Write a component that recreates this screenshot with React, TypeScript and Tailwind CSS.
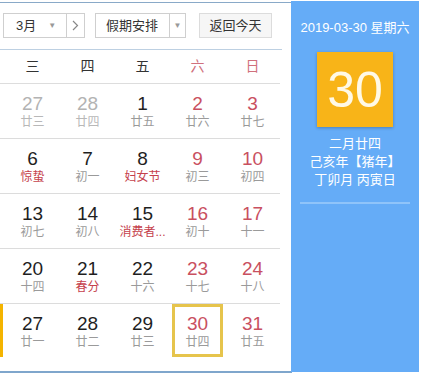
import React from "react";

type Cell = { d: string; l: string; kind: "prev" | "norm" | "wk"; fest?: boolean; today?: boolean };

const rows: Cell[][] = [
  [
    { d: "27", l: "廿三", kind: "prev" },
    { d: "28", l: "廿四", kind: "prev" },
    { d: "1", l: "廿五", kind: "norm" },
    { d: "2", l: "廿六", kind: "wk" },
    { d: "3", l: "廿七", kind: "wk" },
  ],
  [
    { d: "6", l: "惊蛰", kind: "norm", fest: true },
    { d: "7", l: "初一", kind: "norm" },
    { d: "8", l: "妇女节", kind: "norm", fest: true },
    { d: "9", l: "初三", kind: "wk" },
    { d: "10", l: "初四", kind: "wk" },
  ],
  [
    { d: "13", l: "初七", kind: "norm" },
    { d: "14", l: "初八", kind: "norm" },
    { d: "15", l: "消费者...", kind: "norm", fest: true },
    { d: "16", l: "初十", kind: "wk" },
    { d: "17", l: "十一", kind: "wk" },
  ],
  [
    { d: "20", l: "十四", kind: "norm" },
    { d: "21", l: "春分", kind: "norm", fest: true },
    { d: "22", l: "十六", kind: "norm" },
    { d: "23", l: "十七", kind: "wk" },
    { d: "24", l: "十八", kind: "wk" },
  ],
  [
    { d: "27", l: "廿一", kind: "norm" },
    { d: "28", l: "廿二", kind: "norm" },
    { d: "29", l: "廿三", kind: "norm" },
    { d: "30", l: "廿四", kind: "wk", today: true },
    { d: "31", l: "廿五", kind: "wk" },
  ],
];

const font = { fontFamily: '"Liberation Sans", "Noto Sans CJK SC", sans-serif' };

function DayCell({ c }: { c: Cell }) {
  const numColor =
    c.kind === "prev" ? "text-[#b3b3b3]" : c.kind === "wk" ? "text-[#c9505f]" : "text-[#1f1f1f]";
  const lunColor = c.fest
    ? "text-[#c5414c]"
    : c.kind === "prev"
    ? "text-[#b8b8b8]"
    : "text-[#9a9a9a]";
  return (
    <div className="relative flex flex-col items-center pt-[10px]">
      {c.today && (
        <div className="absolute left-[2px] right-[2px] top-[0px] h-[53px] border-[3px] border-[#e6c44c]" />
      )}
      <div className={`text-[19px] leading-[20px] ${numColor}`}>{c.d}</div>
      <div className={`text-[12px] leading-[16px] whitespace-nowrap ${lunColor}`}>{c.l}</div>
    </div>
  );
}

export default function App() {
  return (
    <div className="relative w-[422px] h-[375px] overflow-hidden bg-white flex" style={font}>
      {/* left calendar */}
      <div className="w-[291px] flex flex-col pt-[2px]">
        <div className="h-[1px] bg-[#89a9c8]" />
        <div className="h-[47px] flex items-start pt-[10px] pl-[3px] border-b border-[#bdd0e2] w-[282px]">
          <div className="h-[25px] w-[82px] border border-[#cfcfcf] flex items-center text-[13px] text-[#333]">
            <span className="ml-[12px]">3月</span>
            <span className="ml-[12px] text-[8px] text-[#999]">▼</span>
            <span className="ml-[10px] h-full border-l border-[#cfcfcf] flex-1 flex items-center justify-center text-[#888]">
              <svg width="7" height="11" viewBox="0 0 7 11">
                <path d="M1 1 L5.5 5.5 L1 10" fill="none" stroke="#888" strokeWidth="1.2" />
              </svg>
            </span>
          </div>
          <div className="ml-[10px] h-[25px] w-[91px] border border-[#cfcfcf] flex items-center text-[13px] text-[#333]">
            <span className="ml-[10px]">假期安排</span>
            <span className="ml-[11px] h-full border-l border-[#cfcfcf] flex-1 flex items-center justify-center text-[8px] text-[#999]">
              ▼
            </span>
          </div>
          <div className="ml-[13px] h-[25px] w-[73px] border border-[#dcdcdc] bg-[#f6f6f6] flex items-center justify-center text-[13px] text-[#333]">
            返回今天
          </div>
        </div>
        <div className="w-[280px] h-[34px] pl-[5px] grid grid-cols-5 items-center border-b border-[#dddddd] text-[14px]">
          <div className="text-center text-[#333]">三</div>
          <div className="text-center text-[#333]">四</div>
          <div className="text-center text-[#333]">五</div>
          <div className="text-center text-[#d0707c]">六</div>
          <div className="text-center text-[#d0707c]">日</div>
        </div>
        {rows.map((r, i) => (
          <div
            key={i}
            className={`relative w-[280px] pl-[5px] grid grid-cols-5 ${
              i < 4 ? "h-[55px] border-b border-[#dcdcdc]" : "h-[67px]"
            }`}
          >
            {i === 4 && <div className="absolute left-0 top-0 w-[3px] h-[53px] bg-[#f4b400]" />}
            {r.map((c, j) => (
              <DayCell key={j} c={c} />
            ))}
          </div>
        ))}
        <div className="h-[2px] w-[292px] bg-[#7fa6cc]" />
      </div>

      {/* right panel */}
      <div className="mt-[1px] h-[371px] w-[128px] bg-[#65acf7] flex flex-col items-center text-white">
        <div className="mt-[18px] text-[13px] leading-[18px] whitespace-nowrap">2019-03-30 星期六</div>
        <div className="mt-[15px] w-[76px] h-[75px] bg-[#f8b418] shadow-[0_1px_3px_rgba(0,0,0,0.25)] flex items-center justify-center">
          <span className="text-[50px] leading-none text-[#fff9e6]">30</span>
        </div>
        <div className="mt-[8px] text-[13px] leading-[18px]">二月廿四</div>
        <div className="text-[13px] leading-[18px] whitespace-nowrap">己亥年【猪年】</div>
        <div className="text-[13px] leading-[18px]">丁卯月 丙寅日</div>
        <div className="mt-[13px] w-[110px] h-[2px] bg-[#8fc4fa]" />
      </div>
    </div>
  );
}
